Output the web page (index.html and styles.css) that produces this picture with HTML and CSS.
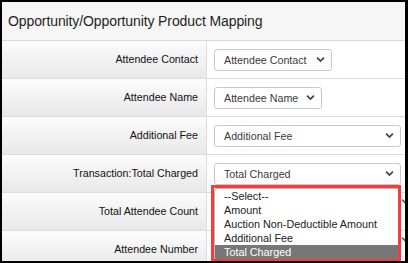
FILE: index.html
```html
<!DOCTYPE html>
<html lang="en">

<head>
    <meta charset="UTF-8">
    <meta name="viewport" content="width=device-width, initial-scale=1.0">
    <title>Opportunity/Opportunity Product Mapping</title>
    <link rel="stylesheet" href="styles.css">
</head>

<body>
    <div class="panel">
        <div class="panel-header">Opportunity/Opportunity Product Mapping</div>

        <div class="map-row">
            <div class="map-label">Attendee Contact</div>
            <div class="map-value">
                <div class="select select-contact">
                    <span>Attendee Contact</span>
                    <svg class="chev" viewBox="0 0 10 7"><path d="M1.2 1.5 L5 5.2 L8.8 1.5" /></svg>
                </div>
            </div>
        </div>

        <div class="map-row">
            <div class="map-label">Attendee Name</div>
            <div class="map-value">
                <div class="select select-name">
                    <span>Attendee Name</span>
                    <svg class="chev" viewBox="0 0 10 7"><path d="M1.2 1.5 L5 5.2 L8.8 1.5" /></svg>
                </div>
            </div>
        </div>

        <div class="map-row">
            <div class="map-label">Additional Fee</div>
            <div class="map-value">
                <div class="select select-wide">
                    <span>Additional Fee</span>
                    <svg class="chev" viewBox="0 0 10 7"><path d="M1.2 1.5 L5 5.2 L8.8 1.5" /></svg>
                </div>
            </div>
        </div>

        <div class="map-row">
            <div class="map-label">Transaction:Total Charged</div>
            <div class="map-value">
                <div class="select select-wide">
                    <span>Total Charged</span>
                    <svg class="chev" viewBox="0 0 10 7"><path d="M1.2 1.5 L5 5.2 L8.8 1.5" /></svg>

                    <!-- open option list, outlined in red -->
                    <div class="select-menu">
                        <ul class="options">
                            <li>--Select--</li>
                            <li>Amount</li>
                            <li>Auction Non-Deductible Amount</li>
                            <li>Additional Fee</li>
                            <li class="selected">Total Charged</li>
                        </ul>
                    </div>
                </div>
            </div>
        </div>

        <div class="map-row">
            <div class="map-label">Total Attendee Count</div>
            <div class="map-value">
                <svg class="chev peek" viewBox="0 0 10 7"><path d="M1.2 1.5 L5 5.2 L8.8 1.5" /></svg>
            </div>
        </div>

        <div class="map-row">
            <div class="map-label">Attendee Number</div>
            <div class="map-value">
                <svg class="chev peek" viewBox="0 0 10 7"><path d="M1.2 1.5 L5 5.2 L8.8 1.5" /></svg>
            </div>
        </div>
    </div>
</body>

</html>
```

FILE: styles.css
```css
body {
    margin: 0;
    font-family: "Liberation Sans", Arial, sans-serif;
    background-color: #fff;
}

.panel {
    width: 408px;
    height: 263px;
    box-sizing: border-box;
    border: 2px solid #000;
    border-right-width: 3px;
    overflow: hidden;
    background: #fff;
}

.panel-header {
    height: 38px;
    display: flex;
    align-items: center;
    padding-left: 6px;
    border-bottom: 1px solid #d9d9d9;
    background-color: #f6f6f6;
    font-size: 14px;
    letter-spacing: -0.1px;
    color: #1f1f1f;
}

.map-row {
    display: flex;
    height: 37px;
    border-bottom: 1px solid #dcdcdc;
}

.map-label {
    width: 196px;
    padding-right: 8px;
    padding-bottom: 2px;
    box-sizing: content-box;
    display: flex;
    align-items: center;
    justify-content: flex-end;
    border-right: 1px solid #dcdcdc;
    background: linear-gradient(#fcfcfc, #e8e8e8);
    font-size: 10.7px;
    color: #111;
}

.map-value {
    flex: 1;
    display: flex;
    align-items: center;
    padding-left: 7px;
    background: #fff;
}

.select {
    position: relative;
    height: 22px;
    box-sizing: border-box;
    display: flex;
    align-items: center;
    justify-content: space-between;
    padding: 0 6px 0 9px;
    border: 1px solid #c9c9c9;
    border-radius: 3px;
    background: #fff;
    font-size: 10.7px;
    color: #3a3a3a;
}

.select-contact {
    width: 118px;
}

.select-name {
    width: 108px;
}

.select-wide {
    width: 187px;
}

.chev {
    width: 9px;
    height: 7px;
    fill: none;
    stroke: #444;
    stroke-width: 2;
}

.chev.peek {
    align-self: flex-start;
    margin-top: 5px;
    margin-left: auto;
    margin-right: -5px;
    stroke: #666;
}

.select-menu {
    position: absolute;
    top: 21px;
    left: -4px;
    width: 184px;
    border: 3px solid #f43c3c;
    background: #fff;
    z-index: 2;
}

.options {
    list-style: none;
    margin: 0;
    padding: 0;
    border-top: 1px solid #b8b8b8;
    border-left: 1px solid #b8b8b8;
    border-top-left-radius: 4px;
}

.options li {
    height: 14px;
    line-height: 14px;
    padding-left: 9px;
    font-size: 10.8px;
    color: #222;
}

.options li.selected {
    background-color: #777;
    color: #fff;
}
```
